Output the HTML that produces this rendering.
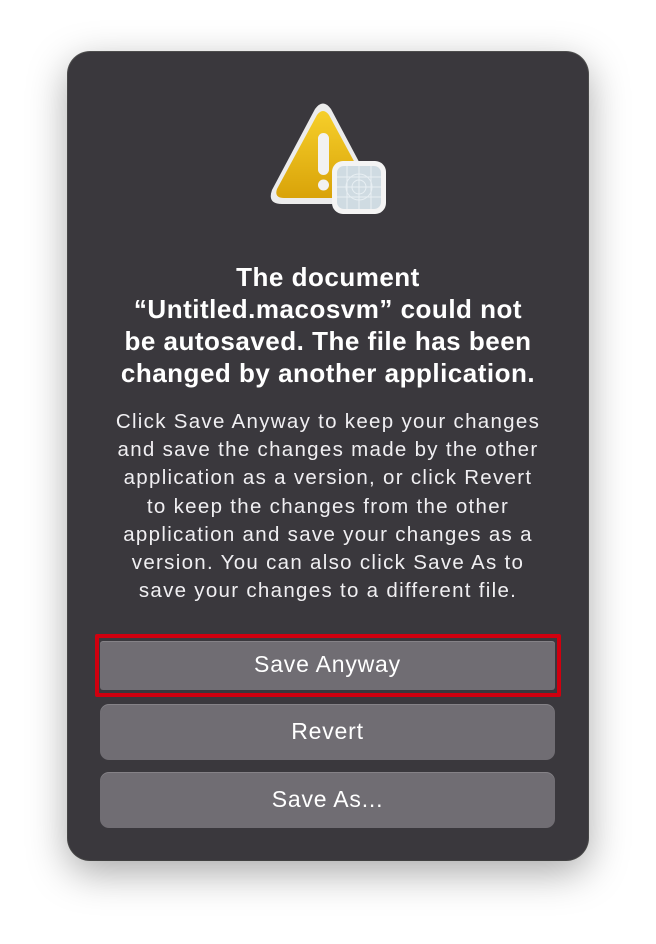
<!DOCTYPE html>
<html><head><style>
html,body{margin:0;padding:0;}
body{width:656px;height:944px;background:#fff;position:relative;overflow:hidden;font-family:"Liberation Sans",sans-serif;}
.dlg{position:absolute;left:68px;top:52px;width:520px;height:808px;background:#3a383d;border-radius:22px;box-shadow:0 12px 40px rgba(0,0,0,0.35),0 0 0 1px #555;}
.t{position:absolute;left:0;width:656px;text-align:center;color:#fff;white-space:nowrap;}
.title{top:261px;font-weight:bold;font-size:26px;letter-spacing:0.5px;line-height:32px;}
.body{top:408px;font-size:20.5px;letter-spacing:1.3px;line-height:28.2px;color:#f0eff2;}
.btn{position:absolute;left:100px;width:455px;background:#706d73;border-radius:9px;color:#fff;font-size:23px;letter-spacing:0.8px;text-align:center;box-shadow:inset 0 1px 0 rgba(255,255,255,0.15);}
.red{position:absolute;left:95px;top:634px;width:458px;height:55px;border:4px solid #d0000f;border-radius:2px;}
</style></head><body>
<div class="dlg"></div>
<svg style="position:absolute;left:266px;top:100px" width="124" height="116" viewBox="0 0 124 116">
<defs><linearGradient id="g" x1="0" y1="0" x2="0" y2="1"><stop offset="0" stop-color="#f6cf2a"/><stop offset="1" stop-color="#d9a309"/></linearGradient></defs>
<path d="M49 9 Q57 -2 65 9 L108 90 Q113 104 98 104 L16 104 Q1 104 6 90 Z" fill="#ececec"/>
<path d="M51 15 Q57 7 63 15 L103 89 Q106 98 96 98 L18 98 Q8 98 11 89 Z" fill="url(#g)"/>
<rect x="52" y="33" width="11" height="42" rx="5.5" fill="#f2f2f2"/>
<circle cx="57.5" cy="85" r="5.5" fill="#f2f2f2"/>
<rect x="66" y="61" width="54" height="53" rx="11" fill="#f4f4f4"/>
<rect x="71" y="66" width="44" height="43" rx="7" fill="#cfdbe2"/>
<g stroke="#e8eff3" stroke-width="1" fill="none"><circle cx="93" cy="87" r="13"/><circle cx="93" cy="87" r="7"/><path d="M81 66v43M93 66v43M105 66v43M71 77h44M71 87h44M71 97h44"/></g>
</svg>
<div class="t title">The document<br>“Untitled.macosvm” could not<br>be autosaved. The file has been<br>changed by another application.</div>
<div class="t body">Click Save Anyway to keep your changes<br>and save the changes made by the other<br>application as a version, or click Revert<br>to keep the changes from the other<br>application and save your changes as a<br>version. You can also click Save As to<br>save your changes to a different file.</div>
<div class="btn" style="top:641px;height:49px;line-height:46px;border-radius:3px;">Save Anyway</div>
<div class="red"></div>
<div class="btn" style="top:704px;height:56px;line-height:54px;">Revert</div>
<div class="btn" style="top:772px;height:56px;line-height:54px;">Save As...</div>
</body></html>
